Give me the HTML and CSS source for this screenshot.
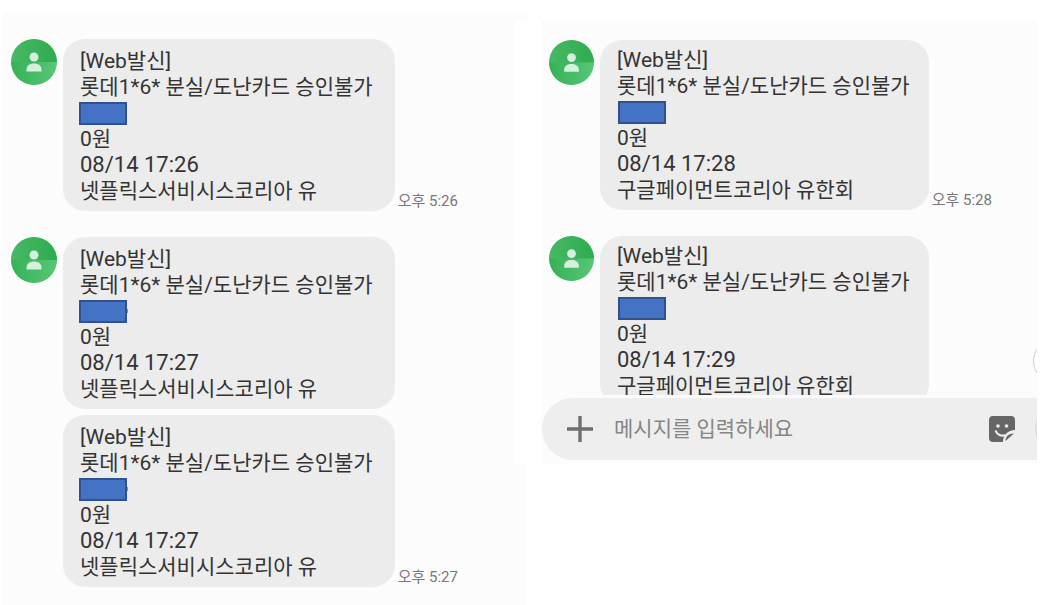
FILE: index.html
```html
<!DOCTYPE html>
<html lang="ko">
<head>
    <meta charset="UTF-8">
    <meta name="viewport" content="width=device-width, initial-scale=1.0">
    <title>메시지</title>
    <link rel="stylesheet" href="styles.css">
</head>
<body>
    <!-- 프로필 아이콘 -->
    <svg class="defs" width="0" height="0" aria-hidden="true">
        <defs>
            <linearGradient id="top" x1="0" y1="0" x2="1" y2="0">
                <stop offset="0" stop-color="#46b964"/>
                <stop offset="1" stop-color="#2fab50"/>
            </linearGradient>
            <linearGradient id="bottom" x1="0" y1="0" x2="1" y2="0">
                <stop offset="0" stop-color="#36b157"/>
                <stop offset="1" stop-color="#56c776"/>
            </linearGradient>
        </defs>
        <symbol id="person" viewBox="0 0 46 46">
            <circle cx="23" cy="23" r="22.500" fill="#3fb45f"/>
            <path d="M0 23a23 23 0 0 1 46 0z" fill="url(#top)"/>
            <path d="M0 23a23 23 0 0 0 46 0z" fill="url(#bottom)"/>
            <circle cx="23" cy="18" r="4.5" fill="#d5f0dc"/>
            <path d="M15.500 32.500v-2c0-4 3.500-6 7.500-6s7.500 2 7.500 6v2z" fill="#d5f0dc"/>
        </symbol>
    </svg>

    <main class="phones">
        <section class="phone phone-left">
            <div class="group">
                <svg class="avatar"><use href="#person"/></svg>
                <div class="messages">
                    <div class="message">
                        <div class="bubble">
                            <p>[Web발신]</p>
                            <p>롯데1*6* 분실/도난카드 승인불가</p>
                            <p class="hidden-name"><span class="mask"></span></p>
                            <p>0원</p>
                            <p class="date">08/14 17:26</p>
                            <p>넷플릭스서비시스코리아 유</p>
                        </div>
                        <time>오후 5:26</time>
                    </div>
                </div>
            </div>
            <div class="group">
                <svg class="avatar"><use href="#person"/></svg>
                <div class="messages">
                    <div class="message">
                        <div class="bubble">
                            <p>[Web발신]</p>
                            <p>롯데1*6* 분실/도난카드 승인불가</p>
                            <p class="hidden-name peek"><span class="mask"></span></p>
                            <p>0원</p>
                            <p class="date">08/14 17:27</p>
                            <p>넷플릭스서비시스코리아 유</p>
                        </div>
                    </div>
                    <div class="message">
                        <div class="bubble">
                            <p>[Web발신]</p>
                            <p>롯데1*6* 분실/도난카드 승인불가</p>
                            <p class="hidden-name peek"><span class="mask"></span></p>
                            <p>0원</p>
                            <p class="date">08/14 17:27</p>
                            <p>넷플릭스서비시스코리아 유</p>
                        </div>
                        <time>오후 5:27</time>
                    </div>
                </div>
            </div>
        </section>

        <section class="phone-right">
            <div class="phone screen">
                <div class="chat">
                    <div class="group">
                        <svg class="avatar"><use href="#person"/></svg>
                        <div class="messages">
                            <div class="message">
                                <div class="bubble">
                                    <p>[Web발신]</p>
                                    <p>롯데1*6* 분실/도난카드 승인불가</p>
                                    <p class="hidden-name"><span class="mask"></span></p>
                                    <p>0원</p>
                                    <p class="date">08/14 17:28</p>
                                    <p>구글페이먼트코리아 유한회</p>
                                </div>
                                <time>오후 5:28</time>
                            </div>
                        </div>
                    </div>
                    <div class="group">
                        <svg class="avatar"><use href="#person"/></svg>
                        <div class="messages">
                            <div class="message">
                                <div class="bubble">
                                    <p>[Web발신]</p>
                                    <p>롯데1*6* 분실/도난카드 승인불가</p>
                                    <p class="hidden-name"><span class="mask"></span></p>
                                    <p>0원</p>
                                    <p class="date">08/14 17:29</p>
                                    <p>구글페이먼트코리아 유한회</p>
                                </div>
                            </div>
                        </div>
                    </div>
                    <button class="scroll-down" type="button" aria-label="맨 아래로"></button>
                </div>
                <form class="composer">
                    <button class="icon-btn" type="button" aria-label="추가">
                        <svg width="26" height="26" viewBox="0 0 26 26">
                            <path d="M13 0v26M0 13h26" stroke="#6e6e6e" stroke-width="3.400"/>
                        </svg>
                    </button>
                    <input type="text" placeholder="메시지를 입력하세요" aria-label="메시지">
                    <button class="icon-btn" type="button" aria-label="스티커">
                        <svg width="26" height="26" viewBox="0 0 26 26">
                            <path d="M4 0h18a4 4 0 0 1 4 4v10c-7 0-12 5-12 12H4a4 4 0 0 1-4-4V4a4 4 0 0 1 4-4z" fill="#666"/>
                            <path d="M16.500 25c0-4.500 3-7.500 8.500-7.500z" fill="#666"/>
                            <circle cx="9" cy="10" r="1.800" fill="#eee"/>
                            <circle cx="17.500" cy="10" r="1.800" fill="#eee"/>
                            <path d="M6.500 14.500c1.500 4.500 6 6 10 4.500" fill="none" stroke="#eee" stroke-width="2.200"/>
                        </svg>
                    </button>
                    <span class="voice"></span>
                </form>
            </div>
        </section>
    </main>
</body>
</html>
```
FILE: styles.css
```css
* {
    box-sizing: border-box;
    font-family: Roboto, 'Noto Sans CJK KR', sans-serif;
}

body {
    margin: 0;
    background-color: #fff;
    color: #333;
    font-size: 21px;
    line-height: 26px;
}

p {
    margin: 0;
}

button {
    padding: 0;
    border: none;
    background: none;
    cursor: pointer;
}

.defs {
    position: absolute;
}

.phones {
    display: flex;
    align-items: flex-start;
    min-height: 100vh;
    padding: 13px 17px 0 3px;
}

.phone {
    background-color: #fcfcfc;
}

.phone-left {
    flex: none;
    width: calc(50% + 7px);
    padding: 26px 8px 18px;
}

/* 왼쪽 화면 가장자리를 살짝 덮는다 */
.phone-right {
    flex: 1;
    min-width: 0;
    margin: 8px 0 0 -12px;
    padding-left: 26px;
    background-color: #fff;
}

.screen {
    display: flex;
    flex-direction: column;
    height: 443px;
    padding-bottom: 4px;
}

.chat {
    position: relative;
    flex: 1;
    min-height: 0;
    padding: 19px 8px 0;
    overflow: hidden;
}

.group {
    display: flex;
    align-items: flex-start;
    gap: 6px;
}

.group + .group {
    margin-top: 26px;
}

.avatar {
    flex: none;
    width: 46px;
    height: 46px;
}

.screen .avatar {
    width: 45px;
    height: 45px;
}

.messages {
    display: flex;
    flex-direction: column;
    gap: 6px;
}

.message {
    display: flex;
    align-items: flex-end;
    gap: 3px;
}

.bubble {
    padding: 9px 22px 7px 17px;
    border-radius: 22px;
    background-color: #ececec;
    white-space: nowrap;
}

.screen .bubble {
    padding: 7px 19px 7px 17px;
}

.date {
    font-size: 22px;
}

.hidden-name {
    display: flex;
    align-items: center;
    height: 26px;
}

.mask {
    width: 48px;
    height: 23px;
    margin-left: -1px;
    border: 2px solid #2f528f;
    background-color: #4472c4;
}

.screen .mask {
    margin-left: 1px;
}

/* 가려진 글자의 끝부분 */
.peek::after {
    content: '';
    width: 1px;
    height: 4px;
    background-color: #888;
}

time {
    color: #777;
    font-size: 15px;
    line-height: 20px;
    white-space: nowrap;
}

.scroll-down {
    position: absolute;
    right: -40px;
    bottom: 12px;
    width: 44px;
    height: 44px;
    border: 1px solid #ccc;
    border-radius: 50%;
    background-color: #fff;
}

.composer {
    display: flex;
    align-items: center;
    height: 62px;
    margin: 3px 0 0 1px;
    padding-left: 25px;
    border-radius: 31px 0 0 31px;
    background-color: #eee;
    overflow: hidden;
}

.composer input {
    flex: 1;
    min-width: 0;
    padding: 0 21px;
    border: none;
    outline: none;
    background: none;
    color: #333;
    font-size: 21px;
}

.composer input::placeholder {
    color: #858585;
    opacity: 1;
}

.icon-btn {
    display: flex;
    flex: none;
}

.voice {
    flex: none;
    width: 44px;
    height: 44px;
    margin: 0 -42px 0 20px;
    border-radius: 50%;
    background-color: #ddd;
}
```
